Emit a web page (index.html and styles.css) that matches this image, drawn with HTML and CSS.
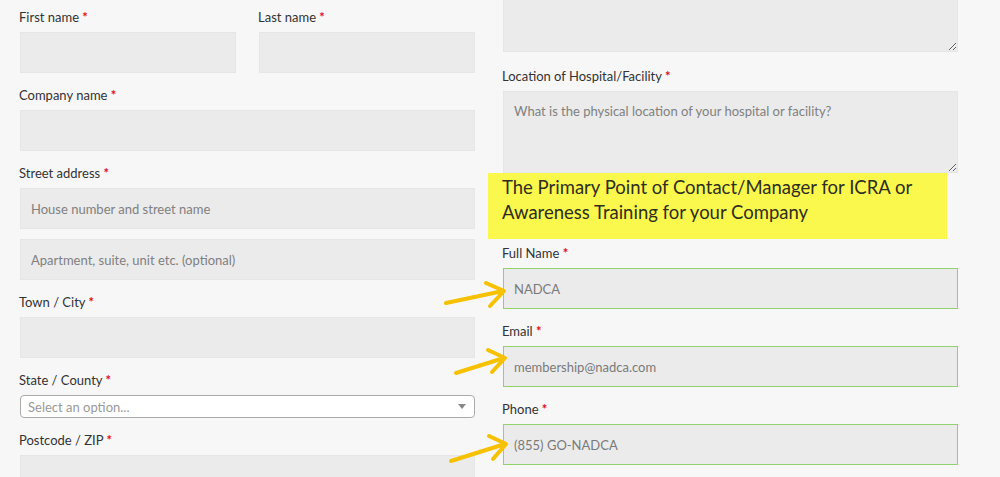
FILE: index.html
```html
<!DOCTYPE html>
<html>
<head>
<meta charset="utf-8">
<link rel="stylesheet" href="styles.css">
</head>
<body>
<div class="page">
  <div class="col col-left">
    <div class="row-2">
      <div class="field">
        <label class="lbl">First name <span class="req">*</span></label>
        <input class="inp" type="text">
      </div>
      <div class="field">
        <label class="lbl">Last name <span class="req">*</span></label>
        <input class="inp" type="text">
      </div>
    </div>
    <div class="field">
      <label class="lbl">Company name <span class="req">*</span></label>
      <input class="inp" type="text">
    </div>
    <div class="field">
      <label class="lbl">Street address <span class="req">*</span></label>
      <input class="inp" type="text" placeholder="House number and street name">
      <input class="inp inp-second" type="text" placeholder="Apartment, suite, unit etc. (optional)">
    </div>
    <div class="field">
      <label class="lbl">Town / City <span class="req">*</span></label>
      <input class="inp" type="text">
    </div>
    <div class="field">
      <label class="lbl">State / County <span class="req">*</span></label>
      <div class="select">
        <span class="select-text">Select an option...</span>
        <span class="select-arrow"></span>
      </div>
    </div>
    <div class="field">
      <label class="lbl">Postcode / ZIP <span class="req">*</span></label>
      <input class="inp" type="text">
    </div>
  </div>
  <div class="col col-right">
    <div class="field field-top">
      <textarea class="ta"></textarea>
    </div>
    <div class="field field-loc">
      <label class="lbl">Location of Hospital/Facility <span class="req">*</span></label>
      <textarea class="ta" placeholder="What is the physical location of your hospital or facility?"></textarea>
    </div>
    <div class="note">The Primary Point of Contact/Manager for ICRA or Awareness Training for your Company</div>
    <div class="field">
      <label class="lbl">Full Name <span class="req">*</span></label>
      <input class="inp inp-ok" type="text" value="NADCA">
    </div>
    <div class="field">
      <label class="lbl">Email <span class="req">*</span></label>
      <input class="inp inp-ok" type="text" value="membership@nadca.com">
    </div>
    <div class="field">
      <label class="lbl">Phone <span class="req">*</span></label>
      <input class="inp inp-ok" type="text" value="(855) GO-NADCA">
    </div>
  </div>
</div>
<svg class="arrows" width="1000" height="477" viewBox="0 0 1000 477">
  <g fill="none" stroke="#f7c100" stroke-width="4" stroke-linecap="round" stroke-linejoin="round">
    <line x1="446" y1="303" x2="503" y2="291"/>
    <polyline points="486,283 504,291 490,306"/>
    <line x1="456" y1="373" x2="504" y2="358"/>
    <polyline points="488,350 505,358 492,372"/>
    <line x1="451" y1="461" x2="505" y2="444"/>
    <polyline points="489,436 506,444 493,459"/>
  </g>
</svg>
</body>
</html>
```

FILE: styles.css
```css
* { box-sizing: border-box; }
html, body { margin: 0; padding: 0; }
body {
  background: #f7f7f7;
  font-family: Lato, "Open Sans", sans-serif;
  font-size: 13px;
  color: #333;
  width: 1000px;
  height: 477px;
  overflow: hidden;
  position: relative;
}
.page {
  display: grid;
  grid-template-columns: 455px 455px;
  column-gap: 28px;
  padding: 7px 0 0 20px;
}
.col { display: flex; flex-direction: column; }
.col-right { margin-top: -37px; }
.row-2 {
  display: grid;
  grid-template-columns: 216px 216px;
  column-gap: 23px;
}
.field { display: flex; flex-direction: column; margin-bottom: 12px; }
.lbl {
  display: block;
  line-height: 20px;
  height: 20px;
  margin-bottom: 5px;
  margin-left: -1px;
  color: #333;
}
.req { color: #e2081b; font-weight: bold; }
.inp {
  display: block;
  width: 100%;
  height: 41px;
  border: 1px solid #e6e6e6;
  background: #ebebeb;
  font-family: Lato, "Open Sans", sans-serif;
  font-size: 13px;
  color: #7a7a7a;
  padding: 0 10px;
  margin: 0;
  outline: none;
}
.inp::placeholder { color: #808080; }
.inp-second { margin-top: 10px; }
.inp-ok { border-color: #91d26f; }
.select {
  height: 23px;
  background: #fff;
  border: 1px solid #aaa;
  border-radius: 4px;
  display: flex;
  align-items: center;
  justify-content: space-between;
  padding: 0 8px 0 7px;
}
.select-text { color: #999; font-size: 13px; }
.select-arrow {
  width: 0; height: 0;
  border-left: 4px solid transparent;
  border-right: 4px solid transparent;
  border-top: 5px solid #888;
}
.ta {
  display: block;
  width: 100%;
  height: 82px;
  background: #ebebeb;
  border: 1px solid #e6e6e6;
  font-family: Lato, "Open Sans", sans-serif;
  font-size: 13px;
  color: #7a7a7a;
  padding: 11px 10px;
  margin: 0;
  outline: none;
  resize: vertical;
}
.ta::placeholder { color: #808080; }
.field-top { margin-bottom: 14px; }
.field-loc { margin-bottom: 0; }
.note {
  background: #fbf84d;
  margin-left: -15px;
  width: 459px;
  height: 66px;
  padding: 2px 14px;
  font-size: 18.5px;
  line-height: 25px;
  color: #2e2e1e;
  margin-bottom: 4px;
}
.arrows { position: absolute; left: 0; top: 0; pointer-events: none; }
```
